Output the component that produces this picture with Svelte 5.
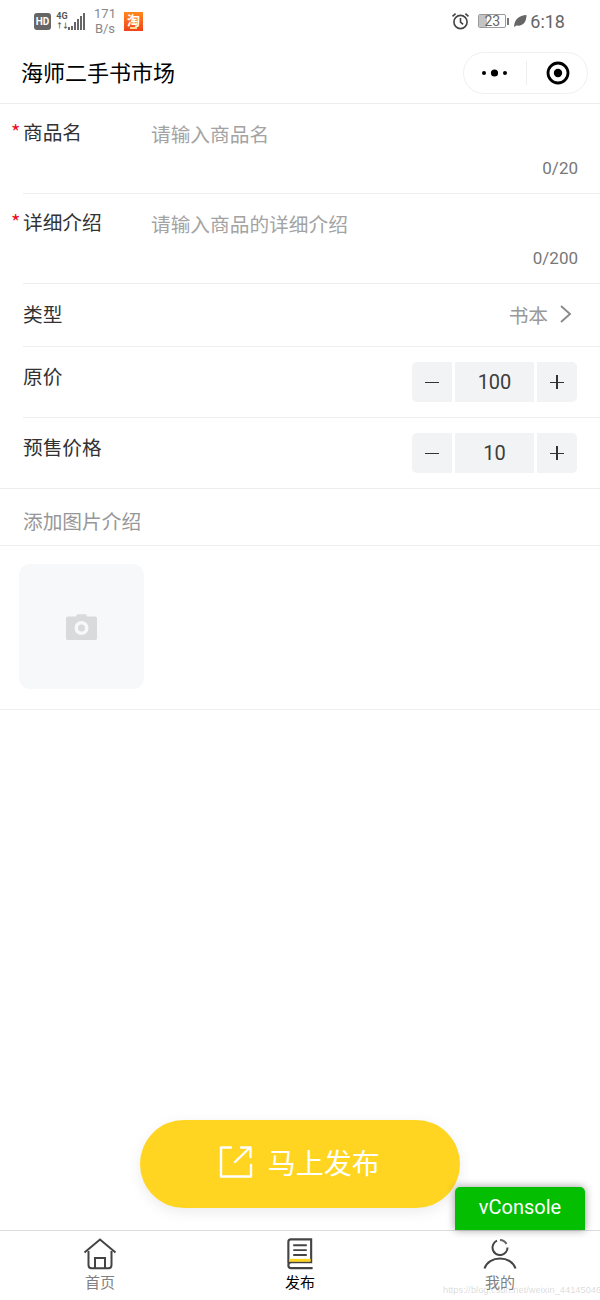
<script>
  const rows = [
    { label: '原价', value: 100 },
    { label: '预售价格', value: 10 }
  ];
  const bars = [3, 4, 8, 11, 14, 17];
</script>

<div class="page">
  <div class="status">
    <div class="status-left">
      <span class="hd">HD</span>
      <span class="net"><b>4G</b><b class="arrows">↑↓</b></span>
      <span class="bars">
        {#each bars as h}<i style="height:{h}px"></i>{/each}
      </span>
      <span class="speed">171<br />B/s</span>
      <span class="tao"><span class="tao-char">淘</span><i class="tao-mark"></i></span>
    </div>
    <div class="status-right">
      <svg class="alarm" width="19" height="18" viewBox="0 0 19 18" fill="none" stroke="#444" stroke-width="1.6">
        <circle cx="9.5" cy="10" r="6.6" />
        <path d="M9.5 6v4.2l2.6 2.2M1.5 4.4 4.6 1.6M17.500 4.400 14.400 1.600" />
      </svg>
      <span class="battery"><span class="level"></span><span class="pct">23</span></span>
      <span class="nub"></span>
      <svg class="leaf" width="14" height="14" viewBox="0 0 14 14"><path d="M1 13C1.500 5 6 1.500 13.500 1 13.500 8 10 12.500 3.500 11.500Z" fill="#666" /></svg>
      <span class="time">6:18</span>
    </div>
  </div>

  <header class="nav">
    <h1>海师二手书市场</h1>
    <div class="capsule">
      <svg width="25" height="10" viewBox="0 0 25 10"><circle cx="2" cy="5" r="2" /><circle cx="12.500" cy="5" r="3.600" /><circle cx="23" cy="5" r="2" /></svg>
      <span class="divider"></span>
      <svg width="24" height="24" viewBox="0 0 24 24"><circle cx="12" cy="12" r="10" fill="none" stroke="#000" stroke-width="2.800" /><circle cx="12" cy="12" r="4.200" /></svg>
    </div>
  </header>

  <section class="field first">
    <div class="field-top">
      <label><span class="star">*</span>商品名</label>
      <span class="placeholder">请输入商品名</span>
    </div>
    <div class="count">0/20</div>
  </section>
  <section class="field">
    <div class="field-top">
      <label><span class="star">*</span>详细介绍</label>
      <span class="placeholder">请输入商品的详细介绍</span>
    </div>
    <div class="count">0/200</div>
  </section>

  <section class="row type">
    <span class="row-label">类型</span>
    <span class="type-value">书本
      <svg width="13" height="20" viewBox="0 0 13 20" fill="none" stroke="#8a8a8a" stroke-width="1.900"><path d="M2 2l9 8-9 8" /></svg>
    </span>
  </section>

  {#each rows as r, i}
    <section class="row stepper-row" class:last={i === 1}>
      <span class="row-label top">{r.label}</span>
      <div class="stepper">
        <span class="btn left"><i class="h"></i></span>
        <span class="val">{r.value}</span>
        <span class="btn right"><i class="h"></i><i class="v"></i></span>
      </div>
    </section>
  {/each}

  <div class="upload-title">添加图片介绍</div>

  <div class="upload">
    <div class="tile">
      <svg width="31" height="27" viewBox="0 0 31 27">
        <path fill="#d9dadc" fill-rule="evenodd" d="M10 3.500 11 1.200h9l1 2.300h8.200c1 0 1.800.8 1.800 1.800v19.900c0 1-.8 1.800-1.800 1.800H1.800C.8 27 0 26.200 0 25.200V5.300c0-1 .8-1.800 1.800-1.800ZM15.500 8a7 7 0 1 0 0 14 7 7 0 0 0 0-14Zm0 3.500a3.500 3.500 0 1 1 0 7 3.500 3.500 0 0 1 0-7Z" />
      </svg>
    </div>
  </div>

  <div class="spacer"></div>

  <nav class="tabbar">
    <div class="tab">
      <svg width="34" height="32" viewBox="0 0 34 32" fill="none" stroke="#444" stroke-width="2">
        <path d="M1.500 14.500 17 1.500l15.500 13" />
        <path d="M5.500 13v14c0 2 1 3.200 3 3.200h17c2 0 3-1.200 3-3.200V13" />
        <path d="M12 30V20h10v10" />
      </svg>
      <span>首页</span>
    </div>
    <div class="tab active">
      <svg width="28" height="33" viewBox="0 0 28 33" fill="none">
        <path d="M2 26V4c0-1.600 1-2.600 2.600-2.600H25.500V25H5C3 25 2 26.500 2 28s1 3 3 3h22" stroke="#444" stroke-width="2.200" />
        <path d="M7 7.500h14M7 12.500h14M7 17.500h14" stroke="#444" stroke-width="2" />
        <path d="M3 23h22" stroke="#ffd521" stroke-width="3" />
      </svg>
      <span>发布</span>
    </div>
    <div class="tab">
      <svg width="34" height="32" viewBox="0 0 34 32" fill="none" stroke="#444" stroke-width="2">
        <path d="M14 2.700A7.500 7.500 0 1 0 24.500 9.500" />
        <path d="M17 2a7.500 7.500 0 0 1 6.500 4" stroke="#666" />
        <path d="M1.500 30.500C3.500 24 10 20.500 17 20.500S30.500 24 32.500 30.500" />
      </svg>
      <span>我的</span>
    </div>
  </nav>

  <button class="publish">
    <svg width="34" height="34" viewBox="0 0 34 34" fill="none" stroke="#fff" stroke-width="2.400" stroke-linecap="round" stroke-linejoin="round">
      <path d="M12 2.500H2V31.500H32V20" />
      <path d="M16 17 31 2.500M22 2.500H31.500V12" />
    </svg>
    <span>马上发布</span>
  </button>

  <div class="vconsole">vConsole</div>
  <div class="watermark">https://blog.csdn.net/weixin_44145046</div>
</div>

<style>
  :global(body) {
    margin: 0;
    background: #fff;
  }
  .page {
    position: relative;
    width: 600px;
    height: 1300px;
    display: flex;
    flex-direction: column;
    overflow: hidden;
    font-family: "Noto Sans CJK SC", "Roboto", sans-serif;
    color: #323233;
    background: #fff;
  }
  .status {
    height: 42px;
    display: flex;
    justify-content: space-between;
    align-items: center;
    flex: none;
    font-family: "Roboto", "Noto Sans CJK SC", sans-serif;
    color: #666;
  }
  .status-left {
    display: flex;
    align-items: center;
    padding-left: 34px;
  }
  .hd {
    width: 17px;
    height: 17px;
    border-radius: 3px;
    background: #666;
    color: #fff;
    font-size: 10px;
    font-weight: 700;
    line-height: 17px;
    text-align: center;
  }
  .net {
    width: 10px;
    display: flex;
    flex-direction: column;
    align-items: center;
    margin-left: 6px;
    font-size: 9px;
    line-height: 10px;
  }
  .net b {
    font-weight: 700;
    color: #555;
    white-space: nowrap;
  }
  .net .arrows {
    font-size: 7px;
    letter-spacing: -1px;
  }
  .bars {
    display: flex;
    align-items: flex-end;
    gap: 1px;
    margin-left: 1px;
    height: 17px;
  }
  .bars i {
    width: 2px;
    background: #666;
  }
  .speed {
    width: 30px;
    margin-left: 5px;
    font-size: 13px;
    line-height: 15px;
    color: #888;
    text-align: center;
  }
  .tao {
    position: relative;
    width: 19px;
    height: 19px;
    margin-left: 4px;
    display: block;
    background: linear-gradient(#ff8a1e, #f0421c);
    color: #fff;
    font-family: "Noto Sans CJK SC", sans-serif;
    text-align: center;
  }
  .tao-char {
    display: block;
    font-size: 13px;
    font-weight: 700;
    line-height: 16px;
  }
  .tao-mark {
    position: absolute;
    left: 6px;
    bottom: 2px;
    width: 7px;
    height: 2px;
    background: #ffd98a;
  }
  .status-right {
    display: flex;
    align-items: center;
    padding-right: 35px;
  }
  .alarm {
    margin-right: 8px;
  }
  .battery {
    position: relative;
    width: 28px;
    height: 14px;
    border: 1px solid #999;
    border-radius: 2px;
    box-sizing: border-box;
    overflow: hidden;
  }
  .level {
    position: absolute;
    left: 0;
    top: 0;
    bottom: 0;
    width: 8px;
    background: #c4c4c4;
  }
  .pct {
    position: absolute;
    inset: 0;
    font-size: 14px;
    line-height: 12px;
    text-align: center;
    color: #666;
  }
  .nub {
    width: 2px;
    height: 7px;
    margin-left: 1px;
    background: #777;
  }
  .leaf {
    margin-left: 4px;
  }
  .time {
    margin-left: 3px;
    font-size: 18px;
    color: #666;
  }
  .nav {
    height: 62px;
    flex: none;
    box-sizing: border-box;
    display: flex;
    align-items: center;
    justify-content: space-between;
    padding: 0 12px 0 21px;
    border-bottom: 1px solid #eee;
  }
  h1 {
    margin: 0 0 3px;
    font-size: 22px;
    font-weight: 400;
    color: #000;
  }
  .capsule {
    width: 125px;
    height: 42px;
    box-sizing: border-box;
    border: 1px solid #f0f0f0;
    border-radius: 21px;
    display: flex;
    align-items: center;
    padding-left: 18px;
  }
  .divider {
    width: 1px;
    height: 24px;
    margin: 0 19px;
    background: #eee;
  }
  .field {
    height: 90px;
    flex: none;
    box-sizing: border-box;
    margin-left: 23px;
    padding-right: 22px;
    border-bottom: 1px solid #eee;
  }
  .field-top {
    display: flex;
    height: 50px;
    padding-top: 14px;
    box-sizing: border-box;
  }
  label {
    position: relative;
    width: 128px;
    font-size: 19.700px;
    line-height: 28px;
    flex: none;
  }
  .star {
    position: absolute;
    left: -12px;
    top: 0;
    color: #ee0a24;
    font-size: 20px;
  }
  .placeholder {
    font-size: 19.700px;
    line-height: 30px;
    color: #a3a3a3;
    position: relative;
    top: 1px;
  }
  .count {
    text-align: right;
    font-family: "Roboto", sans-serif;
    font-size: 17px;
    line-height: 20px;
    color: #777;
    padding-top: 4px;
  }
  .row {
    flex: none;
    box-sizing: border-box;
    margin-left: 23px;
    padding-right: 23px;
    display: flex;
    justify-content: space-between;
    border-bottom: 1px solid #eee;
    font-size: 19.700px;
  }
  .type {
    height: 63px;
    align-items: center;
    padding-bottom: 2px;
    padding-right: 28px;
  }
  .row-label {
    line-height: 30px;
  }
  .row-label.top {
    line-height: 28px;
  }
  .type-value {
    display: flex;
    align-items: center;
    gap: 11px;
    color: #999;
  }
  .stepper-row {
    height: 71px;
    padding-top: 15px;
  }
  .stepper-row.last {
    margin-left: 0;
    padding-left: 23px;
  }
  .stepper {
    display: flex;
    gap: 3px;
    height: 40px;
  }
  .btn {
    position: relative;
    width: 40px;
    height: 40px;
    background: #f2f3f5;
  }
  .btn.left {
    border-radius: 5px 0 0 5px;
  }
  .btn.right {
    border-radius: 0 5px 5px 0;
  }
  .btn i {
    position: absolute;
    background: #333;
    left: 50%;
    top: 50%;
  }
  .btn .h {
    width: 14px;
    height: 1.500px;
    margin: -0.500px 0 0 -7px;
  }
  .btn .v {
    width: 1.500px;
    height: 14px;
    margin: -6.700px 0 0 -0.750px;
  }
  .val {
    width: 79px;
    height: 40px;
    background: #f2f3f5;
    font-family: "Roboto", sans-serif;
    font-size: 20px;
    color: #3c3c3c;
    line-height: 40px;
    text-align: center;
  }
  .upload-title {
    height: 57px;
    flex: none;
    box-sizing: border-box;
    padding-left: 23px;
    border-bottom: 1px solid #eee;
    font-size: 19.700px;
    line-height: 64px;
    color: #969799;
  }
  .upload {
    height: 164px;
    flex: none;
    box-sizing: border-box;
    padding: 18px 0 0 19px;
    border-bottom: 1px solid #eee;
  }
  .tile {
    width: 125px;
    height: 125px;
    border-radius: 11px;
    background: #f7f8fa;
    display: flex;
    align-items: center;
    justify-content: center;
  }
  .spacer {
    flex: 1;
  }
  .tabbar {
    height: 70px;
    flex: none;
    box-sizing: border-box;
    display: flex;
    border-top: 1px solid #ddd;
  }
  .tab {
    flex: 1;
    display: flex;
    flex-direction: column;
    align-items: center;
    padding-top: 7px;
    font-size: 15px;
    line-height: 22px;
    color: #808080;
  }
  .tab svg {
    display: block;
    height: 32px;
  }
  .tab span {
    margin-top: 1px;
  }
  .tab.active {
    color: #000;
  }
  .publish {
    position: absolute;
    left: 140px;
    top: 1120px;
    width: 320px;
    height: 88px;
    border: 0;
    border-radius: 44px;
    background: #ffd521;
    color: #fff;
    box-shadow: 0 4px 14px rgba(0, 0, 0, 0.08);
    display: flex;
    align-items: center;
    justify-content: center;
    gap: 15px;
    font-family: inherit;
    font-size: 28px;
    padding: 0 1.500px 4px 0;
  }
  .vconsole {
    position: absolute;
    left: 455px;
    top: 1187px;
    width: 130px;
    height: 43px;
    border-radius: 5px 5px 0 0;
    background: #04be02;
    color: #fff;
    box-shadow: 0 0 8px rgba(0, 0, 0, 0.4);
    font-family: "Roboto", sans-serif;
    font-size: 20px;
    line-height: 40px;
    text-align: center;
  }
  .watermark {
    position: absolute;
    left: 443px;
    top: 1284px;
    font-family: "Liberation Sans", sans-serif;
    font-size: 9.300px;
    line-height: 12px;
    color: rgba(120, 120, 120, 0.28);
    white-space: nowrap;
  }
</style>
